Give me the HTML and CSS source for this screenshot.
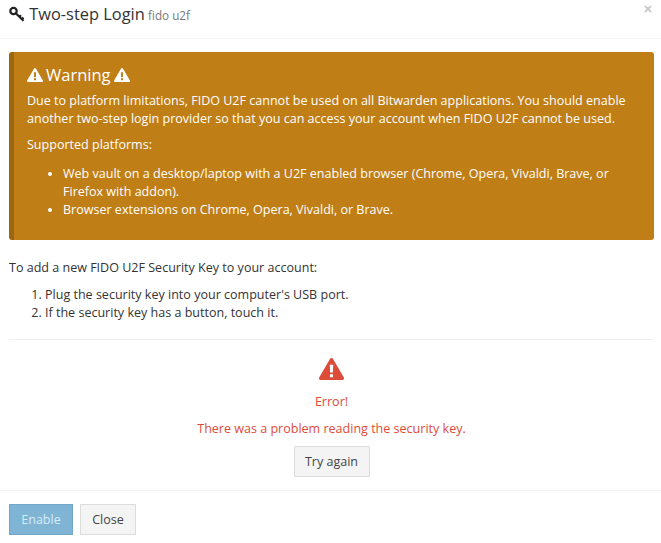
FILE: index.html
```html
<!DOCTYPE html>
<html lang="en">
<head>
    <meta charset="UTF-8">
    <title>Two-step Login</title>
    <link rel="stylesheet" href="styles.css">
</head>
<body>
<div class="modal">
    <div class="modal-header">
        <h4 class="modal-title">
            <svg class="icon-key" viewBox="0 0 16 16"><circle cx="4.500" cy="5" r="3.200"/><path d="M7 7.500L14.500 14.800M10.300 10.800L12 9.200M12.800 13.200L14.500 11.600"/></svg>
            Two-step Login <small>fido u2f</small>
        </h4>
        <svg class="icon-close" viewBox="0 0 8 8"><path d="M1 1L7 7M7 1L1 7"/></svg>
    </div>
    <div class="modal-body">
        <div class="callout">
            <h4 class="callout-title">
                <svg class="icon-warn" viewBox="0 0 16 14"><path fill-rule="evenodd" d="M8 0c.4 0 .7.2.9.5l7 12c.4.7-.1 1.500-.9 1.500H1c-.8 0-1.300-.8-.9-1.500l7-12C7.300.2 7.600 0 8 0zM6.900 4.300l.2 5h1.800l.2-5H6.900zM7 10.300v2h2v-2H7z"/></svg>
                Warning
                <svg class="icon-warn" viewBox="0 0 16 14"><path fill-rule="evenodd" d="M8 0c.4 0 .7.2.9.5l7 12c.4.7-.1 1.500-.9 1.500H1c-.8 0-1.300-.8-.9-1.500l7-12C7.300.2 7.600 0 8 0zM6.900 4.300l.2 5h1.800l.2-5H6.900zM7 10.300v2h2v-2H7z"/></svg>
            </h4>
            <p>Due to platform limitations, FIDO U2F cannot be used on all Bitwarden applications. You should enable another two-step login provider so that you can access your account when FIDO U2F cannot be used.</p>
            <p class="platforms">Supported platforms:</p>
            <ul>
                <li>Web vault on a desktop/laptop with a U2F enabled browser (Chrome, Opera, Vivaldi, Brave, or Firefox with addon).</li>
                <li>Browser extensions on Chrome, Opera, Vivaldi, or Brave.</li>
            </ul>
        </div>
        <p class="steps-intro">To add a new FIDO U2F Security Key to your account:</p>
        <ol>
            <li>Plug the security key into your computer's USB port.</li>
            <li>If the security key has a button, touch it.</li>
        </ol>
        <hr>
        <div class="error-box">
            <svg class="icon-error" viewBox="0 0 16 14"><path fill-rule="evenodd" d="M8 0c.4 0 .7.2.9.5l7 12c.4.7-.1 1.500-.9 1.500H1c-.8 0-1.300-.8-.9-1.500l7-12C7.300.2 7.600 0 8 0zM6.900 4.300l.2 5h1.800l.2-5H6.900zM7 10.300v2h2v-2H7z"/></svg>
            <p class="error-text">Error!</p>
            <p class="error-text">There was a problem reading the security key.</p>
            <button class="btn btn-retry">Try again</button>
        </div>
    </div>
    <div class="modal-footer">
        <button class="btn btn-primary">Enable</button>
        <button class="btn btn-close">Close</button>
    </div>
</div>
</body>
</html>
```

FILE: styles.css
```css
body {
    margin: 0;
    background-color: #fff;
    color: #333;
    font-family: "Open Sans", sans-serif;
    font-size: 12.54px;
    line-height: 18px;
    overflow: hidden;
}
p {
    margin: 0 0 8px;
}
ul, ol {
    margin: 0;
    padding-left: 36px;
}
.modal-header {
    display: flex;
    justify-content: space-between;
    height: 38px;
    padding: 0 9px;
    border-bottom: 1px solid #f4f4f4;
}
.modal-title {
    margin: 0;
    font-size: 16.4px;
    font-weight: 400;
    line-height: 27px;
    color: #333;
}
.modal-title small {
    margin-left: -1px;
    font-size: 11.7px;
    color: #777;
}
.icon-key {
    width: 16px;
    height: 16px;
    vertical-align: -2px;
    fill: none;
    stroke: #222;
    stroke-width: 2.2;
}
.icon-close {
    width: 8px;
    height: 8px;
    margin-top: 5px;
    fill: none;
    stroke: #ccc;
    stroke-width: 2;
}
.modal-body {
    padding: 13px 7px 0 9px;
}
.callout {
    padding: 13px 20px 21px 13px;
    margin-bottom: 19px;
    background-color: #bf7e16;
    border-left: 5px solid #9c6711;
    border-radius: 3px;
    color: #fff;
}
.callout-title {
    display: flex;
    align-items: center;
    gap: 3px;
    margin: 0 0 7px;
    font-size: 16.5px;
    font-weight: 500;
    line-height: 20px;
}
.icon-warn {
    width: 16px;
    height: 14px;
    fill: #fff;
}
.platforms {
    margin-bottom: 11px;
}
.steps-intro {
    margin-bottom: 9px;
}
hr {
    margin: 17px 0;
    border: 0;
    border-top: 1px solid #eee;
}
.error-box {
    padding-bottom: 13px;
    text-align: center;
}
.icon-error {
    display: block;
    width: 25px;
    height: 24px;
    margin: 0 auto 12px;
    fill: #dd4b39;
}
.error-text {
    margin-bottom: 9px;
    color: #dd4b39;
}
.error-text:last-of-type {
    margin-bottom: 8px;
}
.btn {
    height: 31px;
    padding: 0;
    background-color: #f4f4f4;
    border: 1px solid #ddd;
    border-radius: 0;
    color: #444;
    font-family: inherit;
    font-size: 12.54px;
}
.btn-retry {
    display: block;
    width: 76px;
    margin: 0 auto;
}
.btn-primary {
    width: 64px;
    margin-right: 7px;
    background-color: #7fb4d5;
    border-color: #72a7c9;
    color: #d6ecf8;
}
.btn-close {
    width: 56px;
}
.modal-footer {
    display: flex;
    padding: 13px 9px;
    border-top: 1px solid #f4f4f4;
}
```
